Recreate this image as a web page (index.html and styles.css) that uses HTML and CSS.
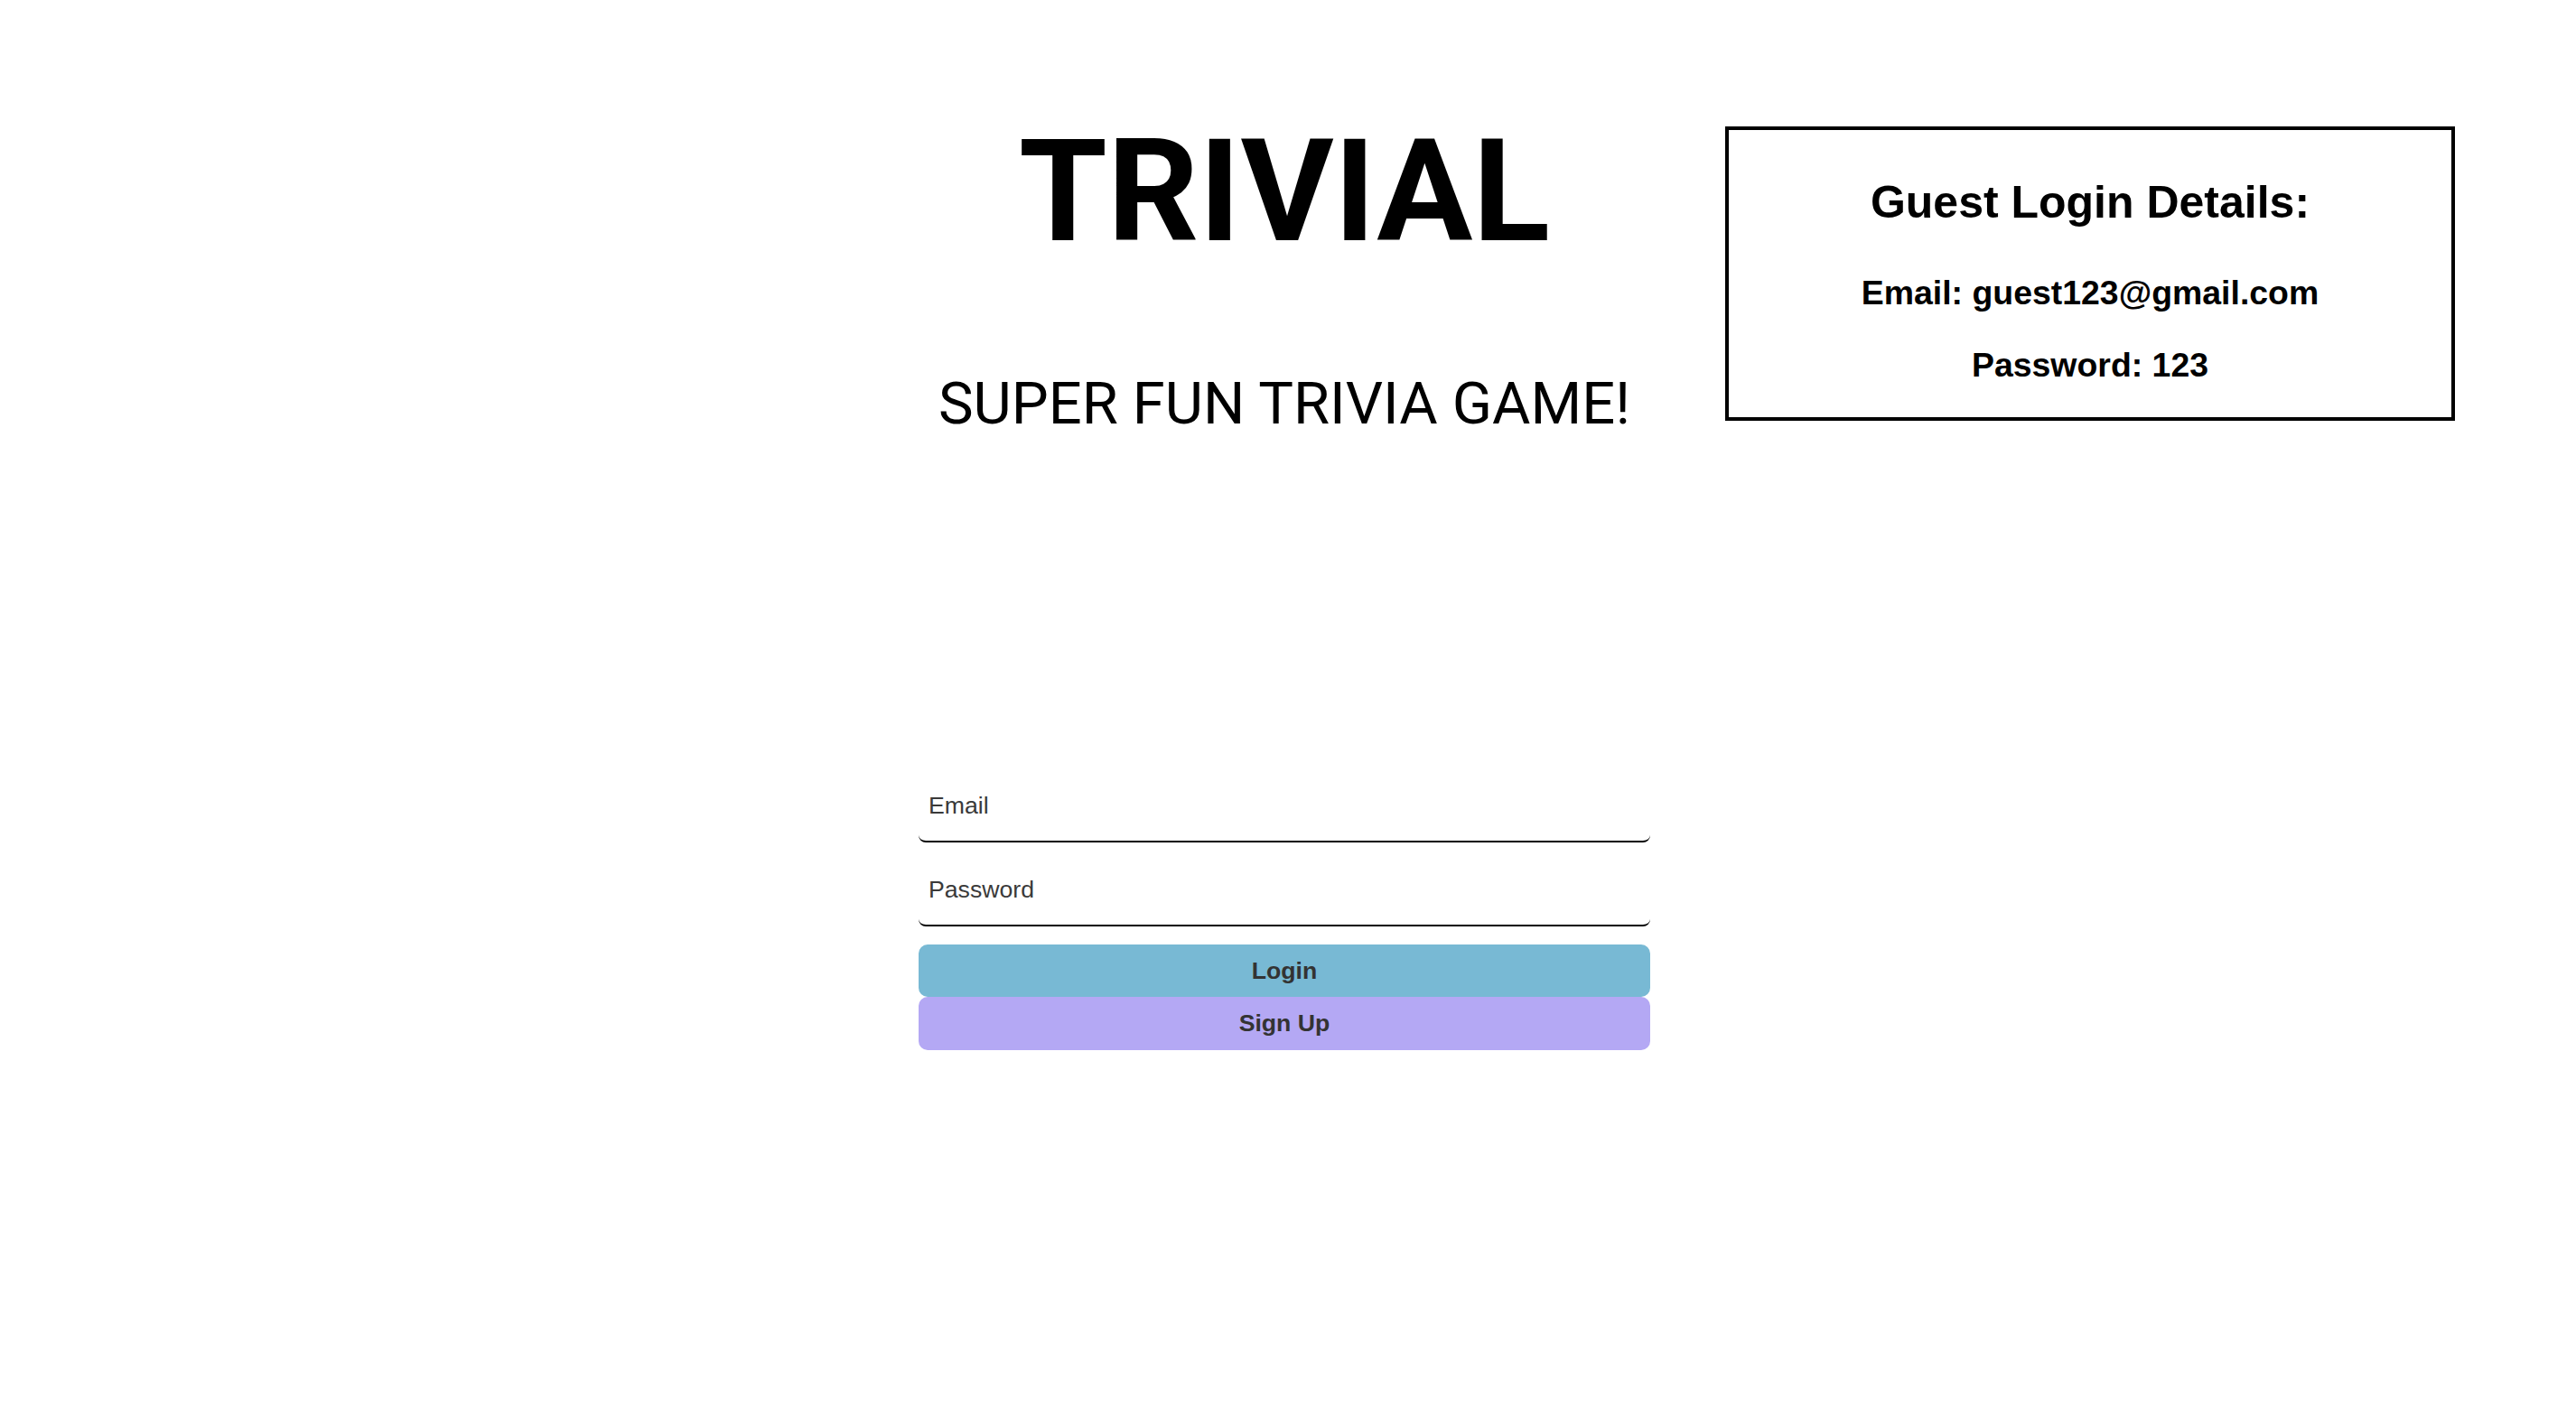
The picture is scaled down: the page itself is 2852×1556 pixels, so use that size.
FILE: index.html
```html
<!DOCTYPE html>
<html lang="en">
<head>
<meta charset="utf-8">
<title>Trivial</title>
<link rel="stylesheet" href="styles.css">
</head>
<body>
<div class="page">
  <main class="center">
    <h1 class="title">TRIVIAL</h1>
    <h2 class="subtitle">SUPER FUN TRIVIA GAME!</h2>
    <form class="login-form">
      <input class="field" type="email" placeholder="Email">
      <input class="field field-last" type="password" placeholder="Password">
      <button class="btn btn-login" type="button">Login</button>
      <button class="btn btn-signup" type="button">Sign Up</button>
    </form>
  </main>
  <aside class="guest-col">
    <div class="guest-box">
      <h2 class="guest-title">Guest Login Details:</h2>
      <h3 class="guest-line guest-email">Email: guest123@gmail.com</h3>
      <h3 class="guest-line guest-pass">Password: 123</h3>
    </div>
  </aside>
</div>
</body>
</html>
```

FILE: styles.css
```css
html, body {
  margin: 0;
  padding: 0;
  background: #ffffff;
}

body {
  font-family: "Liberation Sans", Arial, sans-serif;
  color: #000;
}

.page {
  display: grid;
  grid-template-columns: 1fr 810px 1fr;
  padding-right: 8px;
  min-height: 1556px;
  box-sizing: border-box;
}

.center {
  grid-column: 2;
  display: flex;
  flex-direction: column;
  align-items: stretch;
}

.title {
  margin: 119px 0 0;
  font-family: Roboto, "Liberation Sans", sans-serif;
  font-weight: 700;
  font-size: 158px;
  line-height: normal;
  text-align: center;
  white-space: nowrap;
}

.subtitle {
  margin: 104px 0 0;
  font-family: Roboto, "Liberation Sans", sans-serif;
  font-weight: 400;
  font-size: 65px;
  line-height: normal;
  text-align: center;
  white-space: nowrap;
}

.login-form {
  margin-top: 368px;
  display: flex;
  flex-direction: column;
}

.field {
  height: 80px;
  box-sizing: border-box;
  border: none;
  border-bottom: 2px solid #000;
  border-radius: 8px;
  padding: 0 11px;
  margin: 0 0 13px;
  font-family: "Liberation Sans", Arial, sans-serif;
  font-size: 26.67px;
  color: #333;
  background: transparent;
  outline: none;
}

.field::placeholder {
  color: #3a3a3a;
  opacity: 1;
}

.field-last {
  margin-bottom: 20px;
}

.btn {
  height: 58px;
  border: none;
  border-radius: 10px;
  font-family: "Liberation Sans", Arial, sans-serif;
  font-weight: 700;
  font-size: 26.67px;
  color: #333;
  padding: 0;
}

.btn-login {
  background: #78b9d4;
}

.btn-signup {
  background: #b4a8f4;
  height: 59px;
}

.guest-col {
  grid-column: 3;
}

.guest-box {
  margin: 140px 0 0 83px;
  width: 808px;
  box-sizing: border-box;
  border: 4px solid #000;
  text-align: center;
  display: flex;
  flex-direction: column;
}

.guest-title {
  margin: 51px 0 0;
  font-size: 50px;
  font-weight: 700;
  line-height: normal;
}

.guest-line {
  font-size: 37.44px;
  font-weight: 700;
  line-height: normal;
}

.guest-email {
  margin: 50px 0 0;
}

.guest-pass {
  margin: 37px 0 36px;
}
```
